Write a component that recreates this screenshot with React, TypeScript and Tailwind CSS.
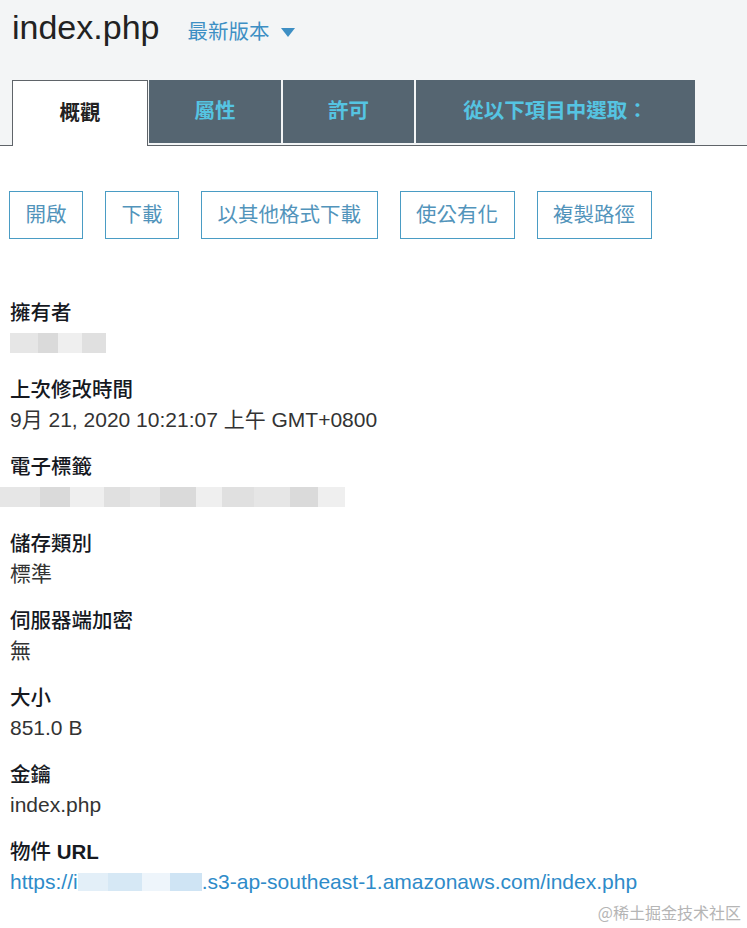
const fields: { label: string; value?: string; blur?: 'owner' | 'etag' }[] = [
  { label: '擁有者', blur: 'owner' },
  { label: '上次修改時間', value: '9月 21, 2020 10:21:07 上午 GMT+0800' },
  { label: '電子標籤', blur: 'etag' },
  { label: '儲存類別', value: '標準' },
  { label: '伺服器端加密', value: '無' },
  { label: '大小', value: '851.0 B' },
  { label: '金鑰', value: 'index.php' },
];

const actions = ['開啟', '下載', '以其他格式下載', '使公有化', '複製路徑'];

function Blur({ widths }: { widths: number[] }) {
  const shades = ['bg-[#e6e6e6]', 'bg-[#dadada]', 'bg-[#efefef]', 'bg-[#e0e0e0]'];
  return (
    <div className="flex h-[20px]">
      {widths.map((w, i) => (
        <div key={i} className={shades[i % shades.length]} style={{ width: w }} />
      ))}
    </div>
  );
}

export default function App() {
  return (
    <div
      className="relative h-[928px] w-[747px] overflow-hidden bg-white"
      style={{ fontFamily: '"Liberation Sans", "Noto Sans CJK TC", sans-serif' }}
    >
      {/* Header with tabs */}
      <div className="bg-[#f3f5f6] pt-[6px]">
        <div className="flex items-baseline px-3">
          <h1 className="text-[34px] leading-[42px] text-[#222]">index.php</h1>
          <button className="ml-[28px] flex items-center text-[20.5px] text-[#3d8fc4]">
            最新版本
            <span className="ml-[12px] inline-block h-0 w-0 border-x-[7px] border-t-[9px] border-x-transparent border-t-[#3d8fc4]" />
          </button>
        </div>
        <div className="mt-[32px] flex items-start border-b border-[#5f6469] pl-3">
          <div className="relative z-10 -mb-px flex h-[66px] w-[136px] items-center justify-center border border-b-0 border-[#5f6469] bg-white text-[20.5px] font-bold text-[#222]">
            概觀
          </div>
          <div className="ml-[1px] flex h-[63px] w-[132px] items-center justify-center bg-[#556571] text-[20.5px] font-bold text-[#55c4e2]">
            屬性
          </div>
          <div className="ml-[2px] flex h-[63px] w-[131px] items-center justify-center bg-[#556571] text-[20.5px] font-bold text-[#55c4e2]">
            許可
          </div>
          <div className="ml-[2px] flex h-[63px] w-[279px] items-center justify-center bg-[#556571] text-[20.5px] font-bold text-[#55c4e2]">
            從以下項目中選取：
          </div>
        </div>
      </div>

      {/* Actions */}
      <div className="mt-[45px] flex gap-[22px] px-[9px]">
        {actions.map((a) => (
          <button
            key={a}
            className="h-[48px] border border-[#4a9cc4] px-[15.5px] text-[20.5px] text-[#5294bb]"
          >
            {a}
          </button>
        ))}
      </div>

      {/* Details */}
      <div className="mt-[59px] px-[10px]">
        {fields.map((f) => (
          <div key={f.label} className="mb-[17px]">
            <div className="text-[20.5px] font-medium leading-[30px] text-[#16191f]">{f.label}</div>
            <div className="flex h-[30px] items-center text-[21px] text-[#333]">
              {f.value}
              {f.blur === 'owner' && <Blur widths={[28, 20, 24, 24]} />}
              {f.blur === 'etag' && (
                <div className="-ml-[10px]">
                  <Blur widths={[40, 30, 34, 26, 30, 36, 26, 32, 36, 28, 27]} />
                </div>
              )}
            </div>
          </div>
        ))}
        <div>
          <div className="text-[20.5px] font-medium leading-[30px] text-[#16191f]">
            物件 <span className="font-bold">URL</span>
          </div>
          <div className="flex h-[30px] items-center text-[21px] text-[#2e8bc9]">
            <span>https://i</span>
            <span className="flex h-[18px] w-[124px]">
              <span className="w-[30px] bg-[#e3eff8]" />
              <span className="w-[34px] bg-[#d6e8f5]" />
              <span className="w-[28px] bg-[#eef5fb]" />
              <span className="w-[32px] bg-[#cfe4f4]" />
            </span>
            <span>.s3-ap-southeast-1.amazonaws.com/index.php</span>
          </div>
        </div>
      </div>

      {/* Watermark */}
      <div
        className="absolute bottom-[4px] right-[6px] text-[16px] text-[#b5b5b5]"
        style={{ fontFamily: '"Noto Sans CJK SC", serif' }}
      >
        @稀土掘金技术社区
      </div>
    </div>
  );
}
